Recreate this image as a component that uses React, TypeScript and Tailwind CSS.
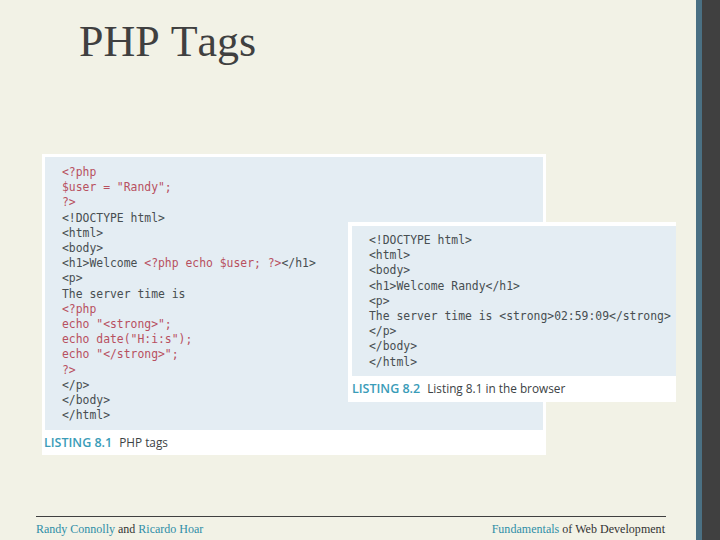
const Red = ({ children }: { children: React.ReactNode }) => (
  <span className="text-[#b8505f]">{children}</span>
);

const Caption = ({ num, text, className }: { num: string; text: string; className?: string }) => (
  <div className={`flex h-[25px] items-center gap-[7px] pt-px font-['Open_Sans',sans-serif] text-[11.8px] text-[#3c4244] ${className ?? ""}`}>
    <span className="text-[12.5px] font-semibold text-[#3a9cb8]">LISTING {num}</span>
    <span>{text}</span>
  </div>
);

const codeClass =
  "whitespace-pre font-['DejaVu_Sans_Mono',monospace] text-[11.4px] text-[#474e51]";

export default function App() {
  return (
    <div className="relative flex h-[540px] w-[720px] overflow-hidden bg-[#f2f2e6] font-['Liberation_Serif',serif]">
      <div className="flex w-[696px] flex-col">
        <h1 className="ml-[79px] mt-[14px] h-[51px] text-[44px] leading-[55px] text-[#404040] [font-kerning:none]">
          PHP Tags
        </h1>

        {/* listing 8.1 */}
        <div className="ml-[42px] mt-[89px] h-[301px] w-[504px] border-x-[3px] border-t-[3px] border-white bg-white">
          <div className={`h-[273px] bg-[#e4edf3] pl-[17px] pt-[8px] leading-[15.2px] ${codeClass}`}>
            <div><Red>{"<?php"}</Red></div>
            <div><Red>{'$user = "Randy";'}</Red></div>
            <div><Red>{"?>"}</Red></div>
            <div>{"<!DOCTYPE html>"}</div>
            <div>{"<html>"}</div>
            <div>{"<body>"}</div>
            <div>{"<h1>Welcome "}<Red>{"<?php echo $user; ?>"}</Red>{"</h1>"}</div>
            <div>{"<p>"}</div>
            <div>{"The server time is"}</div>
            <div><Red>{"<?php"}</Red></div>
            <div><Red>{'echo "<strong>";'}</Red></div>
            <div><Red>{'echo date("H:i:s");'}</Red></div>
            <div><Red>{'echo "</strong>";'}</Red></div>
            <div><Red>{"?>"}</Red></div>
            <div>{"</p>"}</div>
            <div>{"</body>"}</div>
            <div>{"</html>"}</div>
          </div>
          <Caption num="8.1" text="PHP tags" className="-ml-px" />
        </div>

        {/* footer */}
        <div className="ml-[36px] mt-[61px] w-[630px] border-t border-[#404040] pt-[5px]">
          <div className="flex justify-between pr-px text-[12px] leading-[14px] text-[#333333]">
            <span>
              <span className="text-[#2f8ea6]">Randy Connolly</span> and{" "}
              <span className="text-[#2f8ea6]">Ricardo Hoar</span>
            </span>
            <span className="tracking-[0.03px]">
              <span className="text-[#2f8ea6]">Fundamentals</span> of Web Development
            </span>
          </div>
        </div>
      </div>

      {/* listing 8.2 lies over 8.1 */}
      <div className="absolute left-[348px] top-[222px] h-[180px] w-[328px] border-l-4 border-t-4 border-white bg-white">
        <div className={`h-[150px] bg-[#e4edf3] pl-[17px] pt-[7px] leading-[15.2px] ${codeClass}`}>
          <div>{"<!DOCTYPE html>"}</div>
          <div>{"<html>"}</div>
          <div>{"<body>"}</div>
          <div>{"<h1>Welcome Randy</h1>"}</div>
          <div>{"<p>"}</div>
          <div>{"The server time is <strong>02:59:09</strong>"}</div>
          <div>{"</p>"}</div>
          <div>{"</body>"}</div>
          <div>{"</html>"}</div>
        </div>
        <Caption num="8.2" text="Listing 8.1 in the browser" />
      </div>

      {/* right edge */}
      <div className="w-[6px] bg-[#4a7083]" />
      <div className="w-[18px] bg-[#404040]" />
    </div>
  );
}
